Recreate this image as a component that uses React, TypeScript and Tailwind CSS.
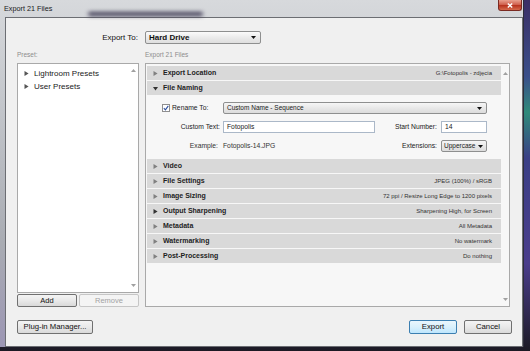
const sections: [string, string][] = [
  ['Video', ''],
  ['File Settings', 'JPEG (100%) / sRGB'],
  ['Image Sizing', '72 ppi / Resize Long Edge to 1200 pixels'],
  ['Output Sharpening', 'Sharpening High, for Screen'],
  ['Metadata', 'All Metadata'],
  ['Watermarking', 'No watermark'],
  ['Post-Processing', 'Do nothing'],
]

function Tri({ open = false, color = '#7a7a7a' }: { open?: boolean; color?: string }) {
  return (
    <svg width="5" height="5" viewBox="0 0 5 5" className="shrink-0">
      {open ? <polygon points="0,1 5,1 2.5,4.6" fill={color} /> : <polygon points="0.5,0 4.6,2.5 0.5,5" fill={color} />}
    </svg>
  )
}

function Arrow({ up = false }: { up?: boolean }) {
  return (
    <svg width="5" height="3" viewBox="0 0 5 3" className="shrink-0">
      {up ? <polygon points="0,3 5,3 2.5,0" fill="#a0a0a0" /> : <polygon points="0,0 5,0 2.5,3" fill="#a0a0a0" />}
    </svg>
  )
}

function Caret() {
  return (
    <svg width="5" height="3" viewBox="0 0 5 3" className="shrink-0">
      <polygon points="0,0 5,0 2.5,3" fill="#111" />
    </svg>
  )
}

function Header({ title, value, open = false, dark = false }: { title: string; value?: string; open?: boolean; dark?: boolean }) {
  return (
    <div className="h-[14px] flex items-center bg-[#d9d9d9] pl-[6px] pr-[9px]">
      <Tri open={open} color={dark ? '#333' : '#808080'} />
      <span className="ml-[5px] font-bold text-[7px] text-[#1e1e1e]">{title}</span>
      {value && <span className="ml-auto text-[6px] text-[#333]">{value}</span>}
    </div>
  )
}

export default function App() {
  return (
    <div className="w-[530px] h-[351px] overflow-hidden bg-[linear-gradient(180deg,#3b2f66_0%,#3a4f8a_22%,#2f8a7a_32%,#3a3f86_45%,#4a3d8c_75%,#1c1a24_100%)] font-['Liberation_Sans',Arial,sans-serif]">
      <div className="w-[524px] h-[347px] flex flex-col bg-[linear-gradient(180deg,#d7d9dc_0%,#c3c6cb_30%,#a9acb3_70%,#9c96b4_100%)] border-r border-[#2e2e3a]">
        {/* title bar */}
        <div className="h-[17px] relative flex items-start">
          <span className="absolute left-[88px] top-[12px] w-[115px] h-[4px] rounded-full bg-[#3a3650] blur-[2px]" />
          <span className="pl-[4px] pt-[4px] text-[7.25px] text-[#1a1a1a] relative">Export 21 Files</span>
          <div className="ml-auto mr-[1px] w-[24px] h-[11px] rounded-b-[3px] border border-t-0 border-[#7a2a22] bg-[linear-gradient(180deg,#e9a08e_0%,#d0624f_45%,#b8341f_55%,#d66a4c_100%)] flex items-center justify-center">
            <svg width="6" height="5" viewBox="0 0 6 5">
              <path d="M0.8 0.5 L5.2 4.5 M5.2 0.5 L0.8 4.5" stroke="#fff" strokeWidth="1.4" />
            </svg>
          </div>
        </div>

        {/* dialog body */}
        <div className="flex-1 ml-[5px] border border-[#6c6e73] bg-[#f0f0f0] flex flex-col">
          <div className="pt-[13px] pl-[11px] grid grid-cols-[122px_365px] gap-x-[6px]">
            <div className="h-[13px] flex items-center justify-end pr-[1px] text-[8px] text-[#111]">Export To:</div>
            <div className="h-[13px] w-[116px] border border-[#8e8f8f] rounded-[2px] bg-[linear-gradient(180deg,#fbfbfb_0%,#ebebeb_50%,#dedede_100%)] flex items-center pl-[3px] pr-[4px]">
              <span className="text-[8px] font-bold text-[#111]">Hard Drive</span>
              <span className="ml-auto"><Caret /></span>
            </div>

            <div className="mt-[7px] h-[8px] flex items-center text-[6.5px] text-[#8c8c8c]">Preset:</div>
            <div className="mt-[7px] h-[8px] flex items-center text-[6.5px] text-[#8c8c8c]">Export 21 Files</div>

            {/* presets */}
            <div className="mt-[4px] flex flex-col">
              <div className="h-[230px] border border-[#a9a9a9] bg-white flex">
                <div className="flex-1 pt-[3px] pl-[6px] flex flex-col">
                  {['Lightroom Presets', 'User Presets'].map((p) => (
                    <div key={p} className="h-[13px] flex items-center gap-[5px]">
                      <Tri color="#555" />
                      <span className="text-[8px] text-[#1a1a1a]">{p}</span>
                    </div>
                  ))}
                </div>
                <div className="w-[10px] flex flex-col items-center justify-between pt-[5px] pb-[5px]">
                  <Arrow up />
                  <Arrow />
                </div>
              </div>
              <div className="mt-[1px] flex gap-[2px]">
                <button className="w-[60px] h-[13px] border border-[#707070] rounded-[2px] bg-[linear-gradient(180deg,#f4f4f4_0%,#e9e9e9_50%,#d9d9d9_100%)] text-[7.5px] text-[#111] leading-none">Add</button>
                <button className="w-[60px] h-[13px] border border-[#c6c6c6] rounded-[2px] bg-[#f4f4f4] text-[7.5px] text-[#a3a3a3] leading-none">Remove</button>
              </div>
            </div>

            {/* export settings */}
            <div className="mt-[4px] h-[244px] border border-[#a9a9a9] bg-[#f7f7f7] flex">
              <div className="flex-1 pl-[1px] pt-[2px] flex flex-col gap-[1px]">
                <Header title="Export Location" value="G:\Fotopolis - zdjęcia" />
                <Header title="File Naming" open dark />
                <div className="pt-[6px] pb-[6px] flex flex-col gap-[7px] text-[6.75px] text-[#1a1a1a]">
                  <div className="h-[12px] flex items-center pr-[14px]">
                    <div className="w-[76px] flex items-center gap-[2px] pl-[15px]">
                      <span className="w-[8px] h-[8px] border border-[#8f8f8f] bg-white flex items-center justify-center">
                        <svg width="6" height="6" viewBox="0 0 6 6">
                          <path d="M0.8 3.2 L2.4 4.8 L5.3 0.9" stroke="#2d4f9e" strokeWidth="1.1" fill="none" />
                        </svg>
                      </span>
                      <span>Rename To:</span>
                    </div>
                    <div className="flex-1 h-[12px] border border-[#8e8f8f] rounded-[2px] bg-[linear-gradient(180deg,#f6f6f6_0%,#e8e8e8_50%,#dcdcdc_100%)] flex items-center pl-[3px] pr-[4px]">
                      <span className="text-[6.5px]">Custom Name - Sequence</span>
                      <span className="ml-auto"><Caret /></span>
                    </div>
                  </div>
                  <div className="h-[12px] flex items-center pr-[14px]">
                    <span className="w-[73px] text-right">Custom Text:</span>
                    <div className="ml-[3px] w-[152px] h-[12px] border border-[#abb8c8] bg-white flex items-center pl-[3px]">Fotopolis</div>
                    <span className="flex-1 text-right">Start Number:</span>
                    <div className="ml-[4px] w-[46px] h-[12px] border border-[#abb8c8] bg-white flex items-center pl-[3px]">14</div>
                  </div>
                  <div className="h-[12px] flex items-center pr-[14px]">
                    <span className="w-[73px] text-right pr-[2px] text-[#333]">Example:</span>
                    <span className="ml-[3px] w-[152px] text-[#333]">Fotopolis-14.JPG</span>
                    <span className="flex-1 text-right">Extensions:</span>
                    <div className="ml-[4px] w-[46px] h-[12px] border border-[#8e8f8f] rounded-[2px] bg-[linear-gradient(180deg,#f6f6f6_0%,#e8e8e8_50%,#dcdcdc_100%)] flex items-center pl-[2px] pr-[3px]">
                      <span className="text-[6.5px]">Uppercase</span>
                      <span className="ml-auto"><Caret /></span>
                    </div>
                  </div>
                </div>
                {sections.map(([t, v]) => (
                  <Header key={t} title={t} value={v} dark={t === 'Output Sharpening'} />
                ))}
              </div>
              <div className="w-[8px] flex flex-col items-center justify-between pt-[8px] pb-[5px]">
                <Arrow up />
                <Arrow />
              </div>
            </div>
          </div>

          {/* footer */}
          <div className="mt-[13px] h-[14px] flex items-center pl-[11px] pr-[10px]">
            <button className="w-[76px] h-[14px] border border-[#707070] rounded-[2px] bg-[linear-gradient(180deg,#f4f4f4_0%,#e9e9e9_50%,#d9d9d9_100%)] text-[7.75px] text-[#111] leading-none">Plug-in Manager...</button>
            <button className="ml-auto w-[48px] h-[14px] border border-[#3c7fb1] rounded-[2px] bg-[linear-gradient(180deg,#eaf6fd_0%,#d9f0fc_50%,#bee6fd_100%)] text-[7.75px] text-[#111] leading-none">Export</button>
            <button className="ml-[7px] w-[48px] h-[14px] border border-[#707070] rounded-[2px] bg-[linear-gradient(180deg,#f4f4f4_0%,#e9e9e9_50%,#d9d9d9_100%)] text-[7.75px] text-[#111] leading-none">Cancel</button>
          </div>
        </div>
      </div>
    </div>
  )
}
